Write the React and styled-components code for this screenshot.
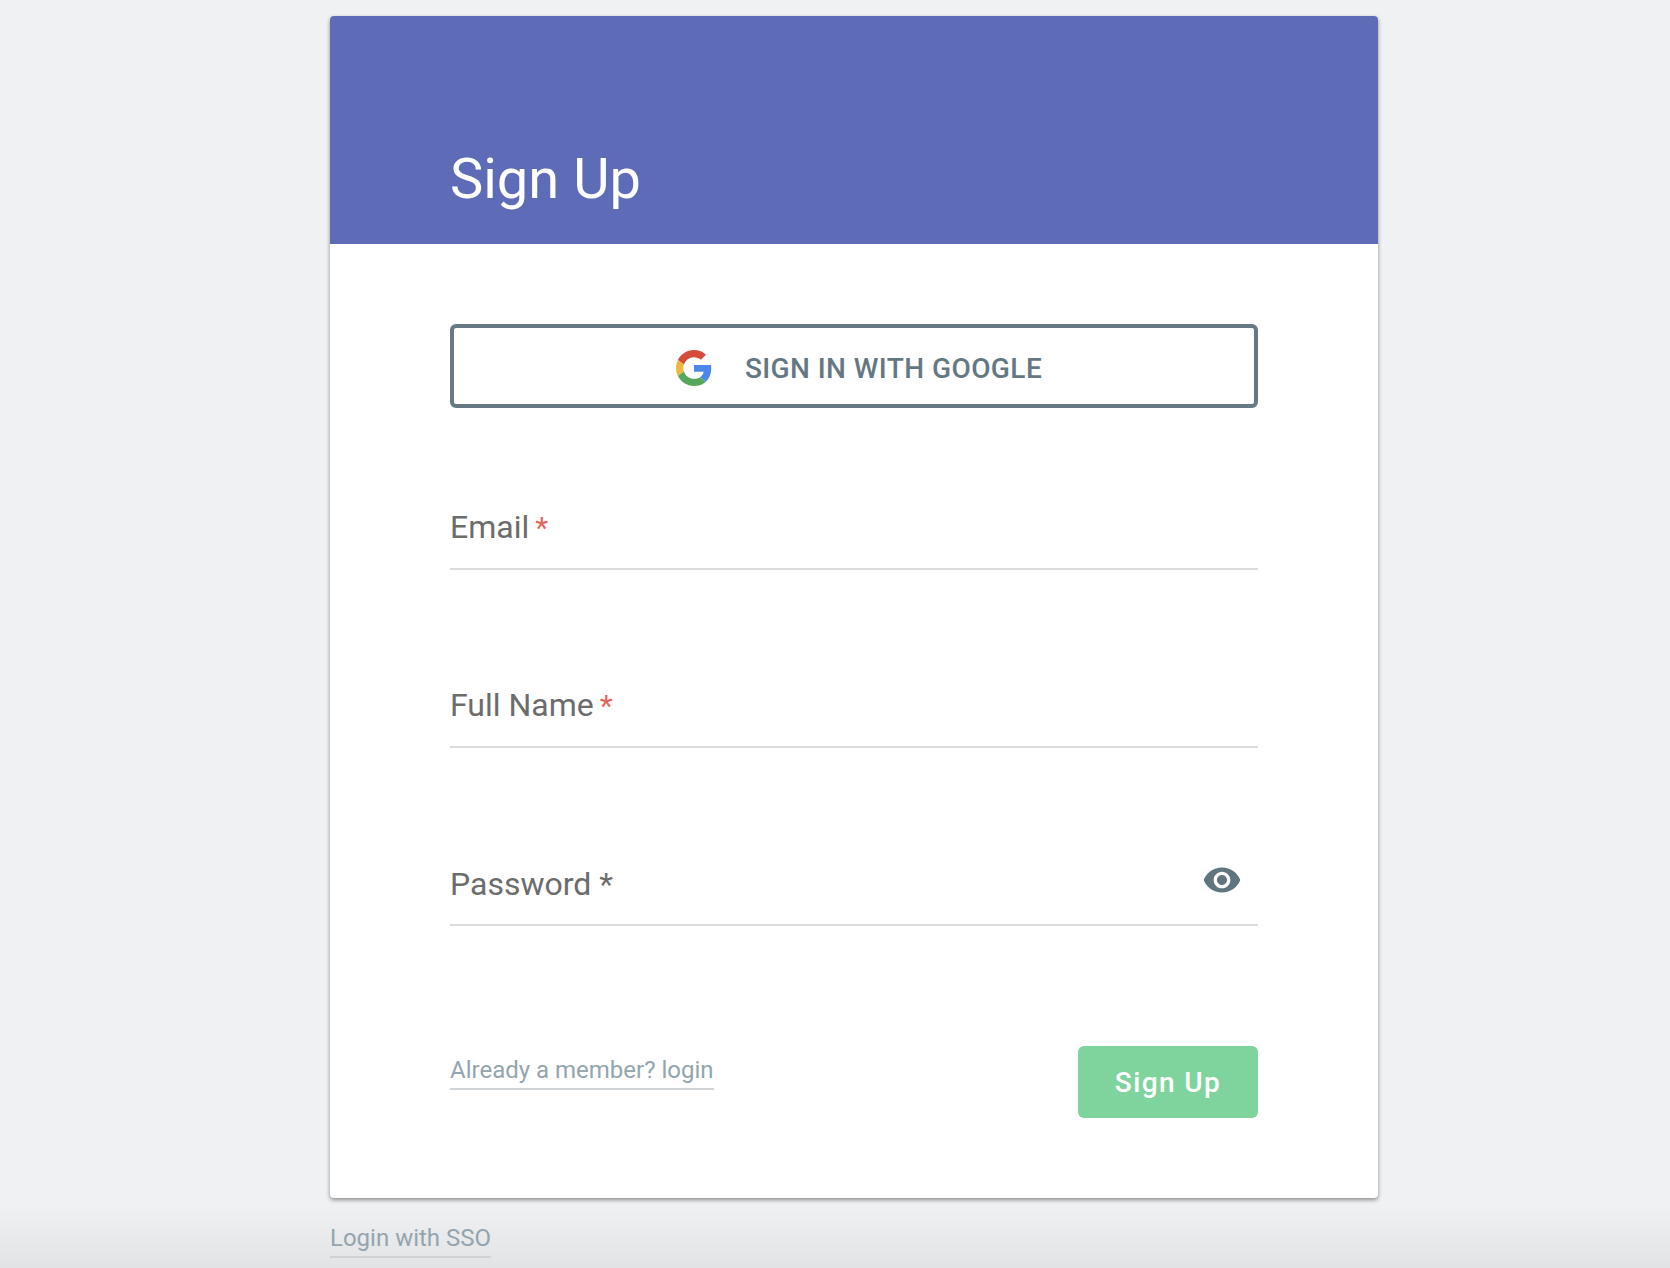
import React from 'react';
import styled, { createGlobalStyle } from 'styled-components';

const GlobalStyle = createGlobalStyle`
  html, body {
    margin: 0;
    padding: 0;
    background: #eff1f3;
    font-family: Roboto, "Liberation Sans", sans-serif;
  }
`;

const Page = styled.div`
  box-sizing: border-box;
  height: 1268px;
  overflow: hidden;
  padding: 16px 292px 0 330px;
  background: linear-gradient(to bottom, #eff1f3 0, #eff1f3 1205px, #e1e3e5 1268px);
`;

const Card = styled.div`
  width: 1048px;
  height: 1182px;
  background: #fff;
  border-radius: 4px;
  box-shadow: 0 2px 4px rgba(0, 0, 0, 0.42);
  overflow: hidden;
`;

const Header = styled.div`
  box-sizing: border-box;
  height: 228px;
  padding: 130px 120px 0;
  background: #5e6cb8;
`;

const Title = styled.h1`
  margin: 0;
  color: #fff;
  font-size: 56px;
  font-weight: 400;
  line-height: 66px;
`;

const Body = styled.div`
  padding: 80px 120px 0;
`;

const GoogleButton = styled.button`
  box-sizing: border-box;
  width: 808px;
  height: 84px;
  display: flex;
  align-items: center;
  justify-content: center;
  gap: 33px;
  background: #fff;
  border: 4px solid #667a85;
  border-radius: 6px;
  color: #647883;
  font-family: inherit;
  font-size: 28px;
  font-weight: 500;
  letter-spacing: 0.42px;
  padding: 4px 0 0 10px;
`;

const Fields = styled.div`
  display: flex;
  flex-direction: column;
`;

const Field = styled.div`
  box-sizing: border-box;
  height: 178px;
  display: flex;
  align-items: flex-end;
  justify-content: space-between;
  border-bottom: 2px solid #dcdcdc;
  padding-bottom: 21px;

  &:first-child {
    height: 162px;
  }
`;

const FieldLabel = styled.label`
  color: #6c6c6c;
  font-size: 32px;
  line-height: 38px;
`;

const Required = styled.span`
  color: #e4645c;
  font-size: 30px;
  margin-left: 6px;
`;

const PlainMark = styled.span`
  margin-left: 8px;
`;

const EyeIcon = styled.svg`
  width: 40px;
  height: 40px;
  margin: 0 16px 3px 0;
  fill: #607580;
`;

const Footer = styled.div`
  display: flex;
  align-items: flex-start;
  justify-content: space-between;
  margin-top: 120px;
`;

const Link = styled.a`
  display: inline-block;
  color: #93a5ae;
  font-size: 24px;
  line-height: 28px;
  padding-bottom: 4px;
  border-bottom: 2px solid #cfd3d6;
  margin-top: ${(props) => props.offset || 0}px;
`;

const SubmitButton = styled.button`
  width: 180px;
  height: 72px;
  border: none;
  border-radius: 6px;
  background: #7fd49d;
  color: #fff;
  font-family: inherit;
  font-size: 28px;
  font-weight: 500;
  letter-spacing: 1.4px;
`;

const GoogleLogo = () => (
  <svg width="36" height="36" viewBox="0 0 48 48">
    <path fill="#D64B3A" d="M24 9.5c3.54 0 6.71 1.22 9.21 3.6l6.85-6.85C35.9 2.38 30.47 0 24 0 14.62 0 6.51 5.38 2.56 13.22l7.98 6.19C12.43 13.72 17.74 9.5 24 9.5z" />
    <path fill="#4E86EC" d="M46.98 24.55c0-1.57-.15-3.09-.38-4.55H24v9.02h12.94c-.58 2.96-2.26 5.48-4.78 7.18l7.73 6c4.51-4.18 7.09-10.36 7.09-17.65z" />
    <path fill="#EDB83F" d="M10.53 28.59c-.48-1.45-.76-2.99-.76-4.59s.27-3.14.76-4.59l-7.98-6.19C.92 16.46 0 20.12 0 24c0 3.88.92 7.54 2.56 10.78l7.97-6.19z" />
    <path fill="#58A55C" d="M24 48c6.48 0 11.93-2.13 15.89-5.81l-7.73-6c-2.15 1.45-4.92 2.3-8.16 2.3-6.26 0-11.57-4.22-13.47-9.91l-7.98 6.19C6.51 42.62 14.62 48 24 48z" />
  </svg>
);

const App = () => {
  return (
    <Page>
      <GlobalStyle />
      <Card>
        <Header>
          <Title>Sign Up</Title>
        </Header>
        <Body>
          <GoogleButton type="button">
            <GoogleLogo />
            SIGN IN WITH GOOGLE
          </GoogleButton>
          <Fields>
            <Field>
              <FieldLabel>Email<Required>*</Required></FieldLabel>
            </Field>
            <Field>
              <FieldLabel>Full Name<Required>*</Required></FieldLabel>
            </Field>
            <Field>
              <FieldLabel>Password<PlainMark>*</PlainMark></FieldLabel>
              <EyeIcon viewBox="0 0 24 24">
                <path d="M12 4.5C7 4.5 2.73 7.61 1 12c1.73 4.39 6 7.5 11 7.5s9.27-3.11 11-7.5c-1.73-4.39-6-7.5-11-7.5zM12 17c-2.76 0-5-2.24-5-5s2.24-5 5-5 5 2.24 5 5-2.24 5-5 5zm0-8c-1.66 0-3 1.34-3 3s1.34 3 3 3 3-1.34 3-3-1.34-3-3-3z" />
              </EyeIcon>
            </Field>
          </Fields>
          <Footer>
            <Link offset={10}>Already a member? login</Link>
            <SubmitButton type="button">Sign Up</SubmitButton>
          </Footer>
        </Body>
      </Card>
      <Link offset={26}>Login with SSO</Link>
    </Page>
  );
};

export default App;
